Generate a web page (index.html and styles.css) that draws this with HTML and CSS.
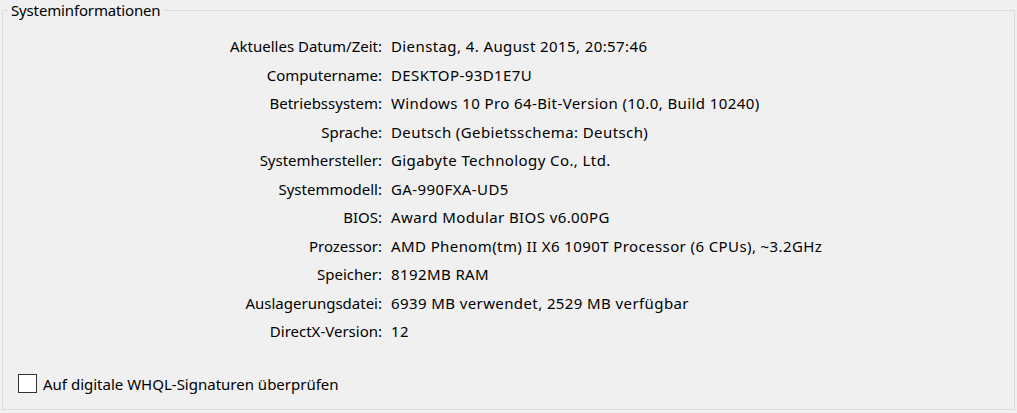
FILE: index.html
```html
<!DOCTYPE html>
<html lang="de">
<head>
<meta charset="utf-8">
<title>Systeminformationen</title>
<link rel="stylesheet" href="styles.css">
</head>
<body>
<div class="page">
  <fieldset class="group">
    <legend class="group-title">Systeminformationen</legend>
    <dl class="info">
      <dt>Aktuelles Datum/Zeit:</dt><dd>Dienstag, 4. August 2015, 20:57:46</dd>
      <dt>Computername:</dt><dd>DESKTOP-93D1E7U</dd>
      <dt>Betriebssystem:</dt><dd>Windows 10 Pro 64-Bit-Version (10.0, Build 10240)</dd>
      <dt>Sprache:</dt><dd>Deutsch (Gebietsschema: Deutsch)</dd>
      <dt>Systemhersteller:</dt><dd>Gigabyte Technology Co., Ltd.</dd>
      <dt>Systemmodell:</dt><dd>GA-990FXA-UD5</dd>
      <dt>BIOS:</dt><dd>Award Modular BIOS v6.00PG</dd>
      <dt>Prozessor:</dt><dd>AMD Phenom(tm) II X6 1090T Processor (6 CPUs), ~3.2GHz</dd>
      <dt>Speicher:</dt><dd>8192MB RAM</dd>
      <dt>Auslagerungsdatei:</dt><dd>6939 MB verwendet, 2529 MB verfügbar</dd>
      <dt>DirectX-Version:</dt><dd>12</dd>
    </dl>
    <label class="check">
      <span class="check-box"></span>
      <span class="check-label">Auf digitale WHQL-Signaturen überprüfen</span>
    </label>
  </fieldset>
</div>
</body>
</html>
```
FILE: styles.css
```css
html, body {
  margin: 0;
  padding: 0;
  background: #f0f0f0;
}
body {
  font-family: "Noto Sans", "Open Sans", sans-serif;
  font-size: 15px;
  color: #000;
  width: 1017px;
  height: 413px;
  overflow: hidden;
}
.page {
  padding: 0 2px 3px 2px;
}
.group {
  margin: 0;
  padding: 0;
  border: 1px solid #dcdcdc;
  height: 410px;
  box-sizing: border-box;
  min-width: 0;
}
.group-title {
  margin-left: 5px;
  padding: 0 3px;
  line-height: 20px;
  letter-spacing: -0.15px;
}
.info {
  display: grid;
  grid-template-columns: 379px 1fr;
  column-gap: 9px;
  margin: 12px 0 0 0;
  line-height: 28.5px;
}
.info dt {
  text-align: right;
  white-space: nowrap;
}
.info dd {
  margin: 0;
  white-space: nowrap;
  letter-spacing: 0.4px;
}
.check {
  display: flex;
  align-items: center;
  gap: 6px;
  margin: 28px 0 0 15px;
}
.check-box {
  width: 17px;
  height: 17px;
  border: 1px solid #333;
  background: #fff;
}
.check-label {
  line-height: 20px;
}
```
